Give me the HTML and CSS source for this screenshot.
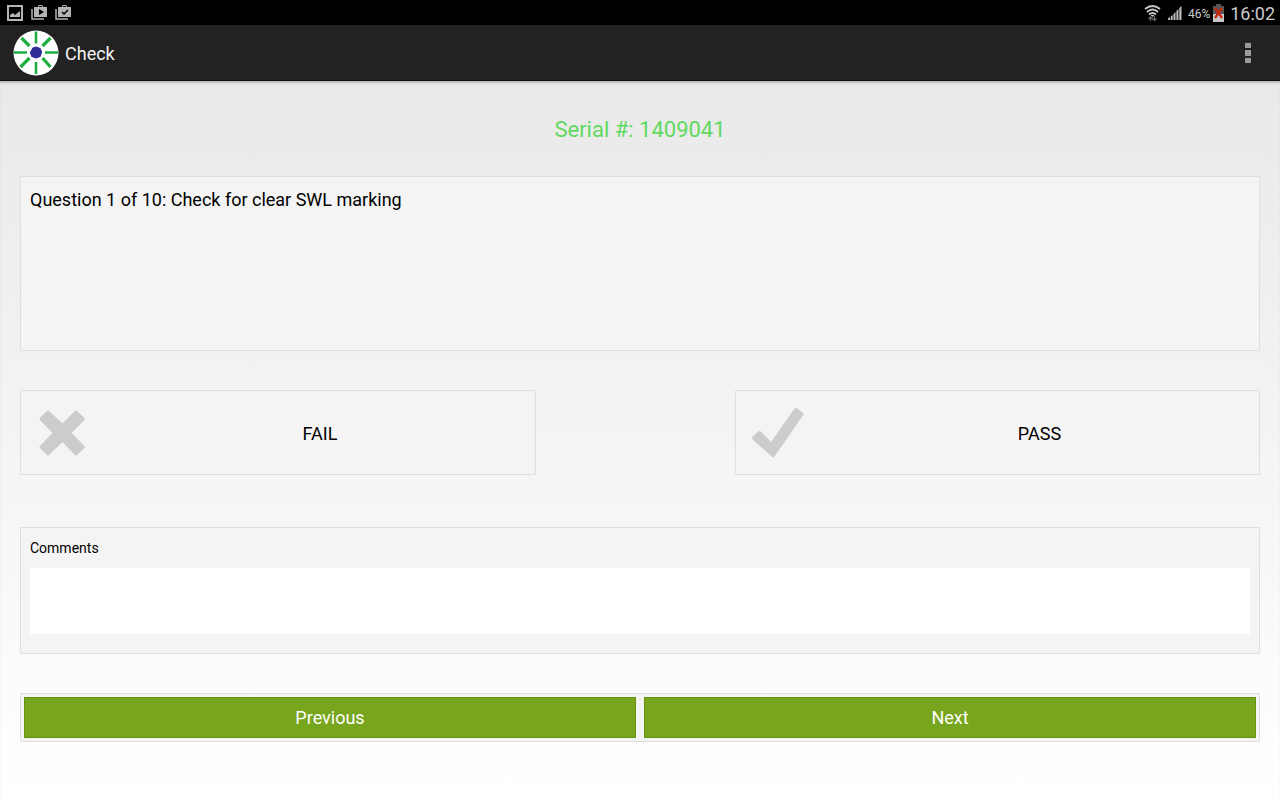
FILE: index.html
```html
<!DOCTYPE html>
<html lang="en">
<head>
<title>Check</title>
<meta charset="UTF-8">
<meta name="viewport" content="width=device-width, initial-scale=1">
<link rel="stylesheet" href="styles.css">
</head>
<body>
	<div class="status-bar">
		<div class="notifications">
			<svg width="16" height="18" viewBox="0 0 16 18">
				<rect x="1" y="2" width="14" height="14" fill="none" stroke="#b4b4b4" stroke-width="2"/>
				<path d="M3 13V11l3-2 2 2 5-4v6z" fill="#b4b4b4"/>
			</svg>
			<svg width="16" height="18" viewBox="0 0 16 18">
				<path d="M1 5v10h12" fill="none" stroke="#b4b4b4" stroke-width="1.500"/>
				<path d="M3 3h4V2l1-1h3l1 1v1h4v10H3zM8 2v1h3V2zM8 5v6l5-3z" fill="#b4b4b4" fill-rule="evenodd"/>
			</svg>
			<svg width="16" height="18" viewBox="0 0 16 18">
				<path d="M1 5v10h12" fill="none" stroke="#b4b4b4" stroke-width="1.500"/>
				<path d="M3 3h4V2l1-1h3l1 1v1h4v10H3zM8 2v1h3V2z" fill="#b4b4b4" fill-rule="evenodd"/>
				<path d="M7 8l2 2 4-4" fill="none" stroke="#000" stroke-width="1.500"/>
			</svg>
		</div>
		<div class="system">
			<svg class="wifi" width="17" height="18" viewBox="0 0 17 18">
				<g fill="none" stroke="#c8c8c8" stroke-width="1.800">
					<path d="M1 5Q8.500-1 16 5"/>
					<path d="M3 8Q8.500 3 14 8"/>
					<path d="M5 10.500Q8.500 7.500 12 10.500"/>
				</g>
				<path d="M6.500 11h4l-2 2z" fill="#c8c8c8"/>
				<path d="M6.500 17v-4M4.500 15l2-2 2 2M10.500 12v4M8.500 14.500l2 2 2-2" fill="none" stroke="#666" stroke-width="1.300"/>
			</svg>
			<svg class="signal" width="14" height="14" viewBox="0 0 14 14">
				<path d="M0 12.500l2-1.500v3H0zM2.700 10.500l2-1.500v5h-2zM5.500 8l2-2v8h-2zM8.400 5l2-2v11h-2zM11.300 2l2.200-2v14h-2.200z" fill="#bbb"/>
			</svg>
			<span class="percent">46%</span>
			<svg class="battery" width="11" height="18" viewBox="0 0 11 18">
				<path d="M3 0h5v2h3v8H0V2h3z" fill="#555"/>
				<path d="M0 10h11v8H0z" fill="#c8c8c8"/>
				<path d="M2 4l7 10M9 4L2 14" stroke="#c8260c" stroke-width="2.200"/>
			</svg>
			<span class="clock">16:02</span>
		</div>
	</div>

	<header class="action-bar">
		<svg class="logo" width="46" height="46" viewBox="0 0 46 46">
			<circle cx="23" cy="23" r="22.500" fill="#fff"/>
			<path d="M23 1.500v12M23 32v12M1 22.500h13M32 22.500h13" stroke="#1fae42" stroke-width="2.600"/>
			<path d="M8.500 8l8 8M37.500 8l-8 8M7.500 37l9-9M37.500 37l-8-9" stroke="#1fae42" stroke-width="3.200"/>
			<path d="M20 18l3-1 4 1.500 1.500 3.500-1.500 4.500-4 1.500-4-1.500-1.500-4z" fill="#312d96" stroke="#312d96" stroke-width="1.200" stroke-linejoin="round"/>
		</svg>
		<h1>Check</h1>
		<button type="button" class="menu" aria-label="More options">
			<svg width="6" height="22" viewBox="0 0 6 22">
				<path d="M0 1h6v5H0zM0 8h6v6H0zM0 16h6v5H0z" fill="#999"/>
			</svg>
		</button>
	</header>

	<main>
		<h2 class="serial">Serial #: 1409041</h2>

		<div class="box question">Question 1 of 10: Check for clear SWL marking</div>

		<div class="answers">
			<button type="button" class="box answer fail">
				<svg width="84" height="83" viewBox="0 0 84 83">
					<path d="M27 21L20 28 33.500 42 20 56 27 63 41.500 49 55 63 62.500 56 48.500 42 62.500 28 55 21 41.500 34.500z" fill="#ccc" stroke="#ccc" stroke-width="3" stroke-linejoin="round"/>
				</svg>
				<span>FAIL</span>
			</button>
			<button type="button" class="box answer pass">
				<svg width="84" height="83" viewBox="0 0 84 83">
					<path d="M18 47L23.500 42 35.500 54 60 19 65.500 23 37 64z" fill="#ccc" stroke="#ccc" stroke-width="4" stroke-linejoin="round"/>
				</svg>
				<span>PASS</span>
			</button>
		</div>

		<div class="box comments">
			<label for="comments">Comments</label>
			<textarea id="comments"></textarea>
		</div>

		<div class="box pager">
			<button type="button">Previous</button>
			<button type="button">Next</button>
		</div>
	</main>
</body>
</html>
```
FILE: styles.css
```css
* {
	box-sizing: border-box;
}

body {
	margin: 0;
	min-height: 100vh;
	display: flex;
	flex-direction: column;
	font-family: Roboto, sans-serif;
	font-size: 18px;
	color: #000;
}

button {
	font: inherit;
	color: inherit;
	cursor: pointer;
}

svg {
	display: block;
	flex: none;
}

/* system bar */
.status-bar {
	display: flex;
	justify-content: space-between;
	align-items: center;
	height: 25px;
	padding: 0 5px 0 7px;
	background: #000;
	color: #ccc;
}

.notifications,
.system {
	display: flex;
	align-items: center;
}

.notifications {
	gap: 8px;
}

.wifi {
	margin-right: 7px;
}

.signal {
	margin-right: 6px;
}

.percent {
	padding-top: 2px;
	font-size: 12px;
	margin-right: 3px;
}

.battery {
	margin-right: 6px;
}

.clock {
	padding-top: 2px;
	line-height: 24px;
}

/* title bar */
.action-bar {
	display: flex;
	align-items: center;
	height: 56px;
	padding: 0 19px 0 13px;
	background: #222;
	border-bottom: 1px solid #111;
	color: #f3f3f3;
}

.action-bar h1 {
	flex: 1;
	margin: 0 0 0 6px;
	padding-top: 2px;
	font-size: 18px;
	font-weight: normal;
}

.menu {
	padding: 8px 10px;
	background: none;
	border: 0;
}

main {
	flex: 1;
	padding: 35px 20px 40px;
	background: linear-gradient(#e9e9e9, #fff);
	box-shadow: inset 0 3px 3px -2px #999;
}

.serial {
	margin: 0 0 32px;
	font-size: 22px;
	line-height: 28px;
	font-weight: normal;
	text-align: center;
	color: #61d85f;
}

.box {
	background: #f4f4f4;
	border: 1px solid #dfdfdf;
	border-radius: 1px;
}

.question {
	min-height: 175px;
	padding: 11px 9px;
	line-height: 24px;
}

/* fail / pass */
.answers {
	display: grid;
	grid-template-columns: 516fr 525fr;
	column-gap: 199px;
	margin: 39px 0 52px;
}

.answer {
	display: flex;
	align-items: center;
	padding: 0;
}

.answer span {
	flex: 1;
	padding-top: 2px;
	text-align: center;
}

.comments {
	padding: 10px 9px 19px;
}

.comments label {
	display: block;
	margin-bottom: 10px;
	font-size: 14px;
	line-height: 20px;
}

.comments textarea {
	display: block;
	width: 100%;
	height: 66px;
	padding: 8px;
	border: 0;
	background: #fff;
	font: inherit;
	resize: none;
}

/* previous / next */
.pager {
	display: flex;
	gap: 8px;
	margin-top: 39px;
	padding: 3px;
}

.pager button {
	flex: 1;
	height: 41px;
	padding: 0;
	background: #77a51d;
	border: 1px solid #64920c;
	color: #fff;
}
```
